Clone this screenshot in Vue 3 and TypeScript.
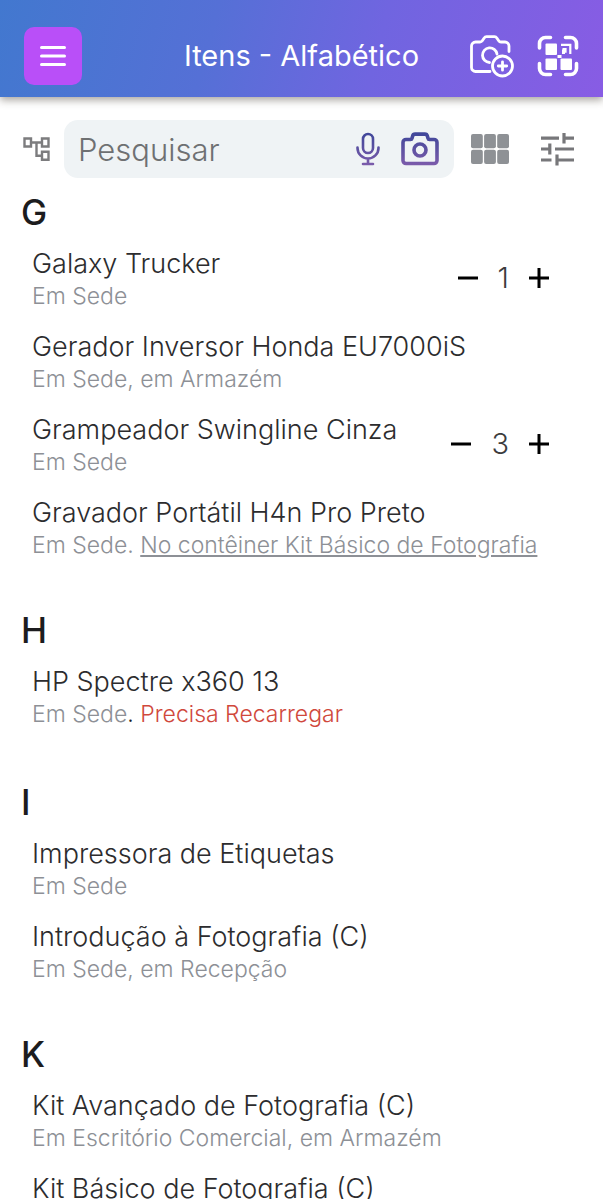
<script setup lang="ts">
import { reactive, ref } from 'vue'

interface Item {
  name: string
  place: string
  container?: string
  alert?: string
  count?: number
}

interface Group {
  letter: string
  items: Item[]
}

const query = ref('')

const groups = reactive<Group[]>([
  {
    letter: 'G',
    items: [
      { name: 'Galaxy Trucker', place: 'Em Sede', count: 1 },
      { name: 'Gerador Inversor Honda EU7000iS', place: 'Em Sede, em Armazém' },
      { name: 'Grampeador Swingline Cinza', place: 'Em Sede', count: 3 },
      {
        name: 'Gravador Portátil H4n Pro Preto',
        place: 'Em Sede.',
        container: 'No contêiner Kit Básico de Fotografia',
      },
    ],
  },
  {
    letter: 'H',
    items: [{ name: 'HP Spectre x360 13', place: 'Em Sede', alert: 'Precisa Recarregar' }],
  },
  {
    letter: 'I',
    items: [
      { name: 'Impressora de Etiquetas', place: 'Em Sede' },
      { name: 'Introdução à Fotografia (C)', place: 'Em Sede, em Recepção' },
    ],
  },
  {
    letter: 'K',
    items: [
      { name: 'Kit Avançado de Fotografia (C)', place: 'Em Escritório Comercial, em Armazém' },
      { name: 'Kit Básico de Fotografia (C)', place: '' },
    ],
  },
])

function step(item: Item, by: number) {
  item.count = Math.max(0, (item.count ?? 0) + by)
}
</script>

<template>
  <div class="app">
    <header class="bar">
      <div class="side">
        <button class="menu" type="button" aria-label="Menu">
          <svg width="28" height="24" viewBox="0 0 28 24" fill="none" stroke="#fff" stroke-width="3" stroke-linecap="round">
            <path d="M2.500 3.500h23M2.500 12h23M2.500 20.500h23" />
          </svg>
        </button>
      </div>
      <h1>Itens - Alfabético</h1>
      <div class="side end">
        <button class="icon" type="button" aria-label="Adicionar foto">
          <svg width="46" height="44" viewBox="0 0 46 44" fill="none" stroke="#fff" stroke-width="2.800" stroke-linecap="round" stroke-linejoin="round">
            <path d="M21 37.500H6.500a4 4 0 0 1-4-4v-21.500a4 4 0 0 1 4-4h4.500q1.500 0 2.300-1.200l1.700-2.600q1-1.500 2.500-1.500h8q1.500 0 2.500 1.500l1.700 2.600q.8 1.200 2.300 1.200h4a4 4 0 0 1 4 4V17.500" />
            <path d="M20.500 28.500A7.300 7.300 0 1 1 28 20" />
            <circle cx="33.500" cy="32" r="10" />
            <path d="M33.500 27.800v8.400M29.300 32h8.400" />
          </svg>
        </button>
        <button class="icon" type="button" aria-label="Ler código QR">
          <svg width="42" height="42" viewBox="0 0 42 42" fill="none" stroke="#fff" stroke-width="3.600" stroke-linecap="round">
            <path d="M2.500 13V8.500a6 6 0 0 1 6-6H13.500M28.500 2.500H33.500a6 6 0 0 1 6 6V13M39.500 28.500v5a6 6 0 0 1-6 6H28.500M13.500 39.500H8.500a6 6 0 0 1-6-6V28.500" />
            <g fill="#fff" stroke="none">
              <rect x="8.500" y="8.500" width="11.500" height="11.500" rx="1" />
              <rect x="8.500" y="23.500" width="11.500" height="11.500" rx="1" />
              <rect x="23.500" y="23.500" width="11.500" height="11.500" rx="1" />
              <rect x="20.500" y="20" width="4" height="3" />
              <rect x="25" y="14.500" width="3" height="4.500" />
            </g>
            <path d="M24 9.800h9.300v9.200M25.500 14.200h3v3.500" stroke-width="2.200" stroke-linecap="butt" />
          </svg>
        </button>
      </div>
    </header>

    <div class="tools">
      <button class="icon" type="button" aria-label="Árvore">
        <svg width="28" height="26" viewBox="0 0 28 26" fill="none" stroke="#7c7c7e" stroke-width="2.400">
          <path d="M2.500 2.500h6.500v8h-6.500zM20 2.500h6.500v8h-6.500zM20 15.700h6.500v8h-6.500zM9 6.500H20M14.500 6.500v13.200H20" />
        </svg>
      </button>
      <div class="search">
        <input v-model="query" type="text" placeholder="Pesquisar" aria-label="Pesquisar" />
        <button class="icon" type="button" aria-label="Pesquisar por voz">
          <svg width="24" height="34" viewBox="0 0 24 34" fill="none" stroke="url(#ink)" stroke-width="2.600" stroke-linecap="round">
            <defs>
              <linearGradient id="ink" gradientUnits="userSpaceOnUse" x1="0" y1="2" x2="0" y2="34">
                <stop offset="0" stop-color="#41479a" />
                <stop offset="1" stop-color="#7d5cab" />
              </linearGradient>
            </defs>
            <rect x="7" y="2" width="10" height="19" rx="5" />
            <path d="M1.500 15.500v.5a10.500 10.500 0 0 0 21 0v-.5M12 26.500V32M7 32h10" />
          </svg>
        </button>
        <button class="icon" type="button" aria-label="Pesquisar por imagem">
          <svg width="38" height="34" viewBox="0 0 38 34" fill="none" stroke="url(#ink)" stroke-width="3.600" stroke-linejoin="round">
            <path d="M5 7.500h4.500q1.200 0 1.500-1.200l.6-2.200q.5-2 2.500-2h9.800q2 0 2.500 2l.6 2.200q.3 1.200 1.500 1.200H33a3 3 0 0 1 3 3V28.500a3 3 0 0 1-3 3H5a3 3 0 0 1-3-3V10.500a3 3 0 0 1 3-3z" />
            <circle cx="19" cy="18" r="6" />
          </svg>
        </button>
      </div>
      <button class="icon grid" type="button" aria-label="Grade">
        <svg width="38" height="30" viewBox="0 0 38 30" fill="#8e9195">
          <rect width="11.800" height="14.200" rx="2" />
          <rect x="13.100" width="11.800" height="14.200" rx="2" />
          <rect x="26.200" width="11.800" height="14.200" rx="2" />
          <rect y="15.800" width="11.800" height="14.200" rx="2" />
          <rect x="13.100" y="15.800" width="11.800" height="14.200" rx="2" />
          <rect x="26.200" y="15.800" width="11.800" height="14.200" rx="2" />
        </svg>
      </button>
      <button class="icon" type="button" aria-label="Filtros">
        <svg width="34" height="34" viewBox="0 0 34 34" fill="none" stroke="#77777a" stroke-width="3.200">
          <path d="M1 6.200h18M24 6.200h10M24 1v10.500M1 17h9M9.800 11.500v11M15 17h19M1 28h10.500M17.500 28H34M17 22.500v11" />
        </svg>
      </button>
    </div>

    <main>
      <section v-for="group in groups" :key="group.letter">
        <h2>{{ group.letter }}</h2>
        <ul>
          <li v-for="item in group.items" :key="item.name">
            <div class="text" :class="{ flagged: item.alert }">
              <h3>{{ item.name }}</h3>
              <p v-if="item.place">
                {{ item.place }}<template v-if="item.container">&nbsp;<a href="#">{{ item.container }}</a></template><template v-if="item.alert"><span class="dot">. </span><span class="alert">{{ item.alert }}</span></template>
              </p>
            </div>
            <div v-if="item.count !== undefined" class="stepper">
              <button class="icon" type="button" aria-label="Diminuir" @click="step(item, -1)">
                <svg width="22" height="22" viewBox="0 0 22 22" stroke="#000" stroke-width="3"><path d="M1 11h20" /></svg>
              </button>
              <output>{{ item.count }}</output>
              <button class="icon" type="button" aria-label="Aumentar" @click="step(item, 1)">
                <svg width="22" height="22" viewBox="0 0 22 22" stroke="#000" stroke-width="3"><path d="M1 11h20M11 1v20" /></svg>
              </button>
            </div>
          </li>
        </ul>
      </section>
    </main>
  </div>
</template>

<style>
body {
  margin: 0;
  background: #fff;
}
</style>

<style scoped>
.app {
  height: 100vh;
  overflow: hidden;
  display: flex;
  flex-direction: column;
  background: #fff;
  font-family: Inter, "Liberation Sans", sans-serif;
  font-weight: 300;
}
button {
  margin: 0;
  padding: 0;
  border: 0;
  background: none;
  font: inherit;
  cursor: pointer;
}
svg {
  display: block;
}
.icon {
  flex: none;
}
.bar {
  flex: none;
  display: flex;
  align-items: center;
  padding: 27px 24px 12px;
  background: linear-gradient(105deg, #4278cf 0%, #5570d6 35%, #7065e0 62%, #885ce4 100%);
  box-shadow: 0 3px 8px rgba(60, 50, 40, 0.45);
}
.side {
  flex: 1;
  display: flex;
  align-items: center;
}
.end {
  justify-content: flex-end;
  gap: 22px;
}
.menu {
  width: 58px;
  height: 58px;
  border-radius: 10px;
  background: #b94ff8;
  display: grid;
  place-items: center;
}
h1 {
  margin: 0;
  color: #fff;
  font-size: 29px;
  line-height: 36px;
  font-weight: 400;
  white-space: nowrap;
}
.tools {
  flex: none;
  display: flex;
  align-items: center;
  padding: 23px 29px 0 22px;
}
.search {
  flex: 1;
  min-width: 0;
  height: 58px;
  margin: 0 17px 0 14px;
  padding: 0 15px 0 14px;
  box-sizing: border-box;
  border-radius: 14px;
  background: #eff3f5;
  display: flex;
  align-items: center;
  gap: 21px;
}
input {
  flex: 1;
  min-width: 0;
  padding: 0;
  border: 0;
  outline: 0;
  background: none;
  font: inherit;
  font-size: 31px;
  color: #333;
}
input::placeholder {
  color: #6e7072;
  opacity: 1;
}
.grid {
  margin-right: 31px;
}
main {
  flex: 1;
  min-height: 0;
  overflow: hidden;
  padding: 13px 53px 0 21px;
}
section {
  margin-bottom: 48px;
}
h2 {
  margin: 0 0 15px;
  font-size: 35px;
  line-height: 42px;
  font-weight: 500;
  color: #1c1c1e;
}
ul {
  margin: 0;
  padding: 0 0 0 11px;
  list-style: none;
  display: grid;
  gap: 19px;
}
li {
  display: flex;
  align-items: center;
}
.text {
  flex: 1;
  min-width: 0;
}
.flagged {
  padding-bottom: 3px;
}
h3 {
  margin: 0;
  font-size: 27px;
  line-height: 32px;
  font-weight: 300;
  color: #2c2c2e;
  white-space: nowrap;
}
p {
  margin: 0;
  font-size: 23px;
  line-height: 32px;
  color: #8d9096;
  white-space: nowrap;
}
a {
  color: inherit;
  text-decoration: underline;
}
.dot {
  color: #1c1c1e;
}
.alert {
  color: #d0483c;
}
.stepper {
  display: flex;
  align-items: center;
  gap: 19px;
  padding-bottom: 4px;
}
output {
  font-size: 29px;
  line-height: 36px;
  color: #3c3c3e;
}
</style>
